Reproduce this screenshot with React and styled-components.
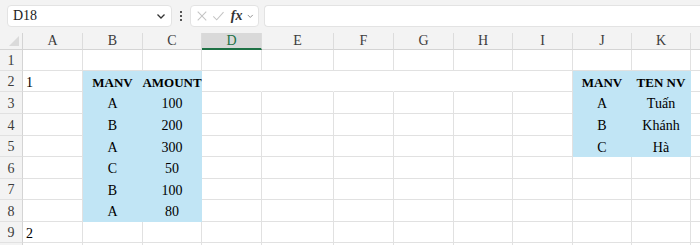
import React from "react";
import styled, { createGlobalStyle } from "styled-components";

const GlobalStyle = createGlobalStyle`
  html, body {
    margin: 0;
    padding: 0;
    background: #ffffff;
    overflow: hidden;
  }
`;

const Page = styled.div`
  width: 700px;
  height: 245px;
  overflow: hidden;
  background: #ffffff;
  font-family: "Liberation Serif", "DejaVu Serif", serif;
`;

const Toolbar = styled.div`
  height: 33px;
  box-sizing: border-box;
  padding: 5px 0 6px 7px;
  display: flex;
  align-items: stretch;
  background: #f3f3f3;
`;

const NameBox = styled.div`
  width: 165px;
  box-sizing: border-box;
  background: #fff;
  border: 1px solid #e3e3e3;
  border-radius: 4px;
  display: flex;
  align-items: center;
  justify-content: space-between;
  padding: 0 4px 0 5px;
  font-size: 14px;
  color: #222;
`;

const Dots = styled.div`
  width: 18px;
  display: flex;
  flex-direction: column;
  align-items: center;
  justify-content: center;
  gap: 2px;
  span {
    width: 2px;
    height: 2px;
    background: #555;
  }
`;

const FxBox = styled.div`
  width: 69px;
  box-sizing: border-box;
  background: #fff;
  border: 1px solid #e3e3e3;
  border-radius: 4px;
  display: flex;
  align-items: center;
  padding: 0 3px 0 5px;
  gap: 4px;
`;

const FxText = styled.span`
  font-style: italic;
  font-weight: bold;
  font-size: 14px;
  color: #333;
  margin-left: 2px;
`;

const FormulaInput = styled.div`
  flex: 1;
  margin-left: 5px;
  background: #fff;
  border: 1px solid #e3e3e3;
  border-right: none;
  border-radius: 4px 0 0 4px;
`;

const Grid = styled.div`
  display: grid;
  grid-template-columns: 23px 60px 60px 59px 60px 72px 60px 60px 59px 60px 59px 59px 60px;
  grid-template-rows: 17px 21px 21px 22px 22px 21px 22px 21px 22px 21px 21px;
`;

const Corner = styled.div`
  position: relative;
  background: #f3f3f3;
  border-right: 1px solid #d4d4d4;
  border-bottom: 1px solid #d4d4d4;
  box-sizing: border-box;
  &::after {
    content: "";
    position: absolute;
    right: 3px;
    bottom: 3px;
    width: 0;
    height: 0;
    border-left: 10px solid transparent;
    border-bottom: 10px solid #dadada;
  }
`;

const ColHead = styled.div`
  box-sizing: border-box;
  background: ${({ selected }) => (selected ? "#d9d9d9" : "#f3f3f3")};
  color: ${({ selected }) => (selected ? "#1e7145" : "#3c3c3c")};
  border-right: 1px solid #dcdcdc;
  border-bottom: ${({ selected }) =>
    selected ? "2px solid #1e7145" : "1px solid #d4d4d4"};
  font-size: 14px;
  display: flex;
  align-items: center;
  justify-content: center;
  padding-top: ${({ selected }) => (selected ? "1px" : "0")};
`;

const RowHead = styled.div`
  box-sizing: border-box;
  background: #f3f3f3;
  color: #3c3c3c;
  border-right: 1px solid #d4d4d4;
  border-bottom: 1px solid #e1e1e1;
  font-size: 14px;
  display: flex;
  align-items: center;
  justify-content: center;
  padding-top: 2px;
`;

const Cell = styled.div`
  box-sizing: border-box;
  background: ${({ fill }) => (fill ? "#c1e5f5" : "#ffffff")};
  border-right: 1px solid
    ${({ fill, open }) => (fill ? "#c1e5f5" : open ? "#ffffff" : "#e1e1e1")};
  border-bottom: 1px solid ${({ fill }) => (fill ? "#c1e5f5" : "#e1e1e1")};
  font-size: ${({ bold }) => (bold ? "13px" : "14px")};
  font-weight: ${({ bold }) => (bold ? "bold" : "normal")};
  color: #000;
  display: flex;
  align-items: center;
  justify-content: ${({ align }) =>
    align === "left" ? "flex-start" : align === "right" ? "flex-end" : "center"};
  padding: 3px 3px 0 3px;
  white-space: nowrap;
  overflow: visible;
`;

const Chevron = ({ size = 11, color = "#444" }) => (
  <svg width={size} height={size} viewBox="0 0 12 12">
    <path d="M2.5 4.5 L6 8 L9.5 4.5" fill="none" stroke={color} strokeWidth="1.3" />
  </svg>
);

const cols = ["A", "B", "C", "D", "E", "F", "G", "H", "I", "J", "K", ""];

// blue table cells, keyed "row-col"
const blue = {};
const put = (r, c, t, bold) => {
  blue[`${r}-${c}`] = { t, bold };
};
put(2, 1, "MANV", true);
put(2, 2, "AMOUNT", true);
[["A", "100"], ["B", "200"], ["A", "300"], ["C", "50"], ["B", "100"], ["A", "80"]].forEach(
  ([m, a], i) => {
    put(3 + i, 1, m);
    put(3 + i, 2, a);
  }
);
put(2, 9, "MANV", true);
put(2, 10, "TEN NV", true);
[["A", "Tuấn"], ["B", "Khánh"], ["C", "Hà"]].forEach(([m, n], i) => {
  put(3 + i, 9, m);
  put(3 + i, 10, n);
});

const plain = { "2-0": "1", "9-0": "2" };

export default function App() {
  const rows = [1, 2, 3, 4, 5, 6, 7, 8, 9, 10];
  return (
    <Page>
      <GlobalStyle />
      <Toolbar>
        <NameBox>
          <span>D18</span>
          <Chevron size={12} color="#333" />
        </NameBox>
        <Dots>
          <span />
          <span />
          <span />
        </Dots>
        <FxBox>
          <svg width="14" height="14" viewBox="0 0 14 14">
            <path d="M2 2 L12 12 M12 2 L2 12" stroke="#c4c4c4" strokeWidth="1.2" fill="none" />
          </svg>
          <svg width="15" height="14" viewBox="0 0 15 14">
            <path d="M1.5 7.5 L5.5 11.5 L13.5 2.5" stroke="#c4c4c4" strokeWidth="1.2" fill="none" />
          </svg>
          <FxText>fx</FxText>
          <Chevron size={10} color="#888" />
        </FxBox>
        <FormulaInput />
      </Toolbar>
      <Grid>
        <Corner />
        {cols.map((c, i) => (
          <ColHead key={i} selected={c === "D"}>
            {c}
          </ColHead>
        ))}
        {rows.map((r) => (
          <React.Fragment key={r}>
            <RowHead>{r < 10 ? r : ""}</RowHead>
            {cols.map((_, c) => {
              const b = blue[`${r}-${c}`];
              if (b) {
                return (
                  <Cell key={c} fill bold={b.bold}>
                    {b.t}
                  </Cell>
                );
              }
              const t = plain[`${r}-${c}`];
              return (
                <Cell key={c} align="left" open={r === 2 && c >= 3 && c <= 7}>
                  {t}
                </Cell>
              );
            })}
          </React.Fragment>
        ))}
      </Grid>
    </Page>
  );
}
